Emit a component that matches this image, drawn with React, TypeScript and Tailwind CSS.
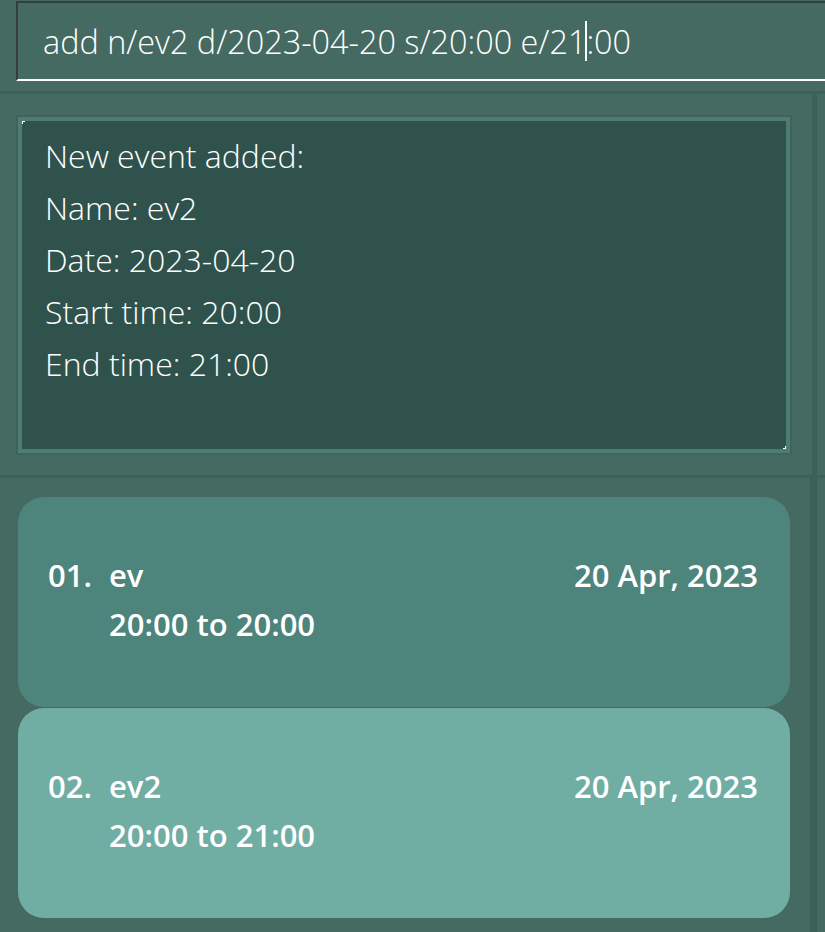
import React from 'react';

interface EventItem {
  name: string;
  date: string;
  start: string;
  end: string;
}

const EVENTS: EventItem[] = [
  { name: 'ev', date: '20 Apr, 2023', start: '20:00', end: '20:00' },
  { name: 'ev2', date: '20 Apr, 2023', start: '20:00', end: '21:00' },
];

const RESULT_LINES = [
  'New event added:',
  'Name: ev2',
  'Date: 2023-04-20',
  'Start time: 20:00',
  'End time: 21:00',
];

const FONT = { fontFamily: '"Open Sans", "Noto Sans", sans-serif' };

const EventCard: React.FC<{ item: EventItem; index: number }> = ({ item, index }) => {
  const odd = index % 2 === 0;
  return (
    <div
      className={`h-[210px] rounded-[26px] flex flex-col justify-center pl-[30px] pr-[32px] pb-[6px] text-white font-semibold text-[31px] ${
        odd ? 'bg-[#4d847b]' : 'bg-[#70ada2]'
      }`}
    >
      <div className="flex items-baseline leading-[40px]">
        <span className="w-[61px]">{String(index + 1).padStart(2, '0')}.</span>
        <span className="flex-1">{item.name}</span>
        <span>{item.date}</span>
      </div>
      <div className="pl-[61px] leading-[40px] mt-[9px]">
        {item.start} to {item.end}
      </div>
    </div>
  );
};

export default function App() {
  return (
    <div className="w-[825px] h-[932px] bg-[#446a62] overflow-hidden flex flex-col" style={FONT}>
      {/* Command box */}
      <div className="pt-px pl-4 h-[91px] shrink-0">
        <div className="h-[80px] border-t-2 border-l-2 border-[#363d3a] border-b-2 border-b-white flex items-center pl-[25px] text-[32.4px] font-light text-white">
          <span>add n/ev2 d/2023-04-20 s/20:00 e/21</span>
          <span className="inline-block w-[2px] h-[40px] bg-white mx-[-1px]" />
          <span>:00</span>
        </div>
      </div>
      <div className="h-[3px] bg-[#3d6159] shrink-0" />

      {/* Result panel */}
      <div className="h-[381px] shrink-0 flex">
        <div className="flex-1 pl-4 pt-[21px] pr-[20px] pb-[20px]">
          <div className="h-[340px] border-2 border-[#3f645b] bg-[#4e7b72] p-1">
            <div className="relative h-full bg-[#2f534c] pl-[23px] pt-[9px] text-[32px] font-light text-white leading-[52px]">
              {RESULT_LINES.map((l) => (
                <div key={l}>{l}</div>
              ))}
              <span className="absolute left-0 top-0 w-[3px] h-[3px] border-l border-t border-white" />
              <span className="absolute right-0 bottom-0 w-[3px] h-[3px] border-r border-b border-white" />
            </div>
          </div>
        </div>
        <div className="w-[5px] bg-[#3d6159] mr-[8px]" />
      </div>
      <div className="h-[3px] bg-[#3d6159] shrink-0" />

      {/* Event list */}
      <div className="flex-1 flex">
        <div className="flex-1 pl-[18px] pr-[20px] pt-[19px] flex flex-col gap-px">
          {EVENTS.map((e, i) => (
            <EventCard key={e.name} item={e} index={i} />
          ))}
        </div>
        <div className="w-[7px] bg-[#3d6159] mr-[8px]" />
      </div>
    </div>
  );
}
